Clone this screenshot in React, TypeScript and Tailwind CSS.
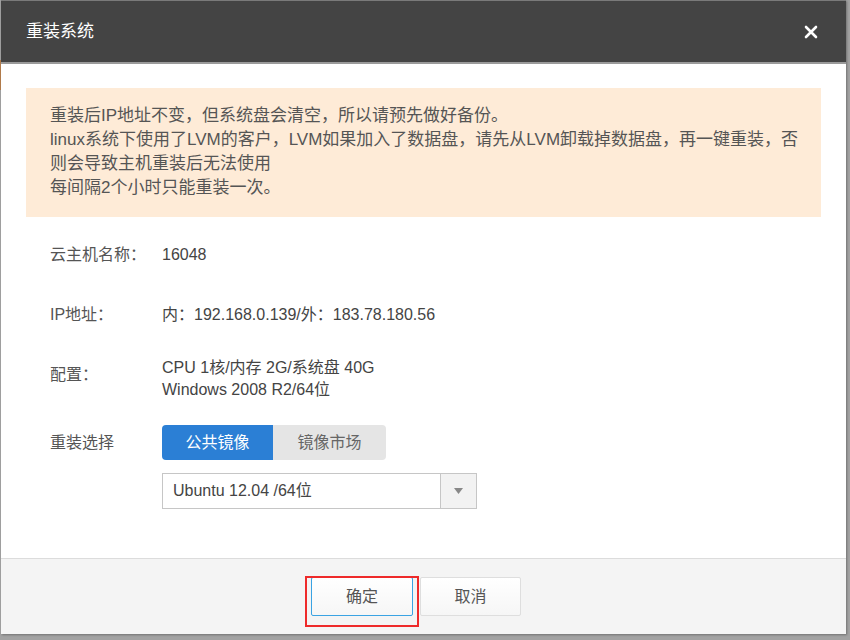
import React from "react";

const font = { fontFamily: '"Liberation Sans", "Noto Sans CJK SC", sans-serif' };

export default function App() {
  return (
    <div
      className="relative w-[850px] h-[640px] bg-[#a2a2a2] overflow-hidden"
      style={font}
    >
      <div className="absolute left-0 top-[60px] w-px h-[30px] bg-[#b07a4a]" />
      <div className="ml-px w-[845px] h-[634px] bg-white flex flex-col border-t border-[#7a7a7a] shadow-[1px_1px_2px_rgba(0,0,0,0.3)]">
        {/* Header */}
        <div className="h-[63px] shrink-0 bg-[#444444] border-b-2 border-[#9a9a9a] flex items-center justify-between pl-[25px] pr-[28px]">
          <span className="text-[17px] text-white">重装系统</span>
          <svg width="14" height="14" viewBox="0 0 14 14">
            <path d="M2 2 L12 12 M12 2 L2 12" stroke="white" strokeWidth="2.6" strokeLinecap="round" />
          </svg>
        </div>

        {/* Body */}
        <div className="flex-1 px-[25px] pt-[24px]">
          <div className="bg-[#feebd7] pl-[24px] pr-[8px] pt-[16px] pb-[17px] text-[17px] leading-[24px] text-[#555]">
            <p>重装后IP地址不变，但系统盘会清空，所以请预先做好备份。</p>
            <p>linux系统下使用了LVM的客户，LVM如果加入了数据盘，请先从LVM卸载掉数据盘，再一键重装，否则会导致主机重装后无法使用</p>
            <p>每间隔2个小时只能重装一次。</p>
          </div>

          <div className="pl-[24px] text-[16px] leading-[22px] text-[#555]">
            <div className="flex mt-[27px]">
              <span className="w-[112px]">云主机名称：</span>
              <span className="text-[#444]">16048</span>
            </div>
            <div className="flex mt-[38px]">
              <span className="w-[112px]">IP地址：</span>
              <span className="text-[#444]">内：192.168.0.139/外：183.78.180.56</span>
            </div>
            <div className="flex mt-[31px]">
              <span className="w-[112px] mt-[7px]">配置：</span>
              <div className="text-[#444]">
                <div>CPU 1核/内存 2G/系统盘 40G</div>
                <div>Windows 2008 R2/64位</div>
              </div>
            </div>
            <div className="flex items-center mt-[24px]">
              <span className="w-[112px]">重装选择</span>
              <div className="flex h-[35px]">
                <div className="w-[111px] bg-[#2b7fd5] text-white rounded-l-[4px] flex items-center justify-center">
                  公共镜像
                </div>
                <div className="w-[113px] bg-[#e5e5e5] text-[#666] rounded-r-[4px] flex items-center justify-center">
                  镜像市场
                </div>
              </div>
            </div>
            <div className="ml-[112px] mt-[13px] w-[315px] h-[36px] border-[1.5px] border-[#c6c6c6] flex">
              <div className="flex-1 flex items-center pl-[10px] text-[#444]">Ubuntu 12.04 /64位</div>
              <div className="w-[36px] border-l border-[#c6c6c6] bg-[#f2f2f2] flex items-center justify-center">
                <svg width="9" height="6" viewBox="0 0 9 6">
                  <path d="M0 0 H9 L4.5 6 Z" fill="#888" />
                </svg>
              </div>
            </div>
          </div>
        </div>

        {/* Footer */}
        <div className="h-[76px] shrink-0 bg-[#f4f4f4] border-t border-[#dcdcdc] flex items-start pl-[310px] pt-[18px] gap-[7px] text-[16px] text-[#555]">
          <button className="w-[102px] h-[39px] border border-[#3aa3e3] bg-gradient-to-b from-white to-[#f6f6f6] rounded-[2px]">
            确定
          </button>
          <button className="w-[101px] h-[39px] border border-[#dedede] bg-gradient-to-b from-white to-[#f6f6f6] rounded-[2px]">
            取消
          </button>
        </div>
      </div>

      {/* red annotation box */}
      <div className="absolute left-[305px] top-[576px] w-[114px] h-[51px] border-2 border-[#ee2a2a]" />
    </div>
  );
}
